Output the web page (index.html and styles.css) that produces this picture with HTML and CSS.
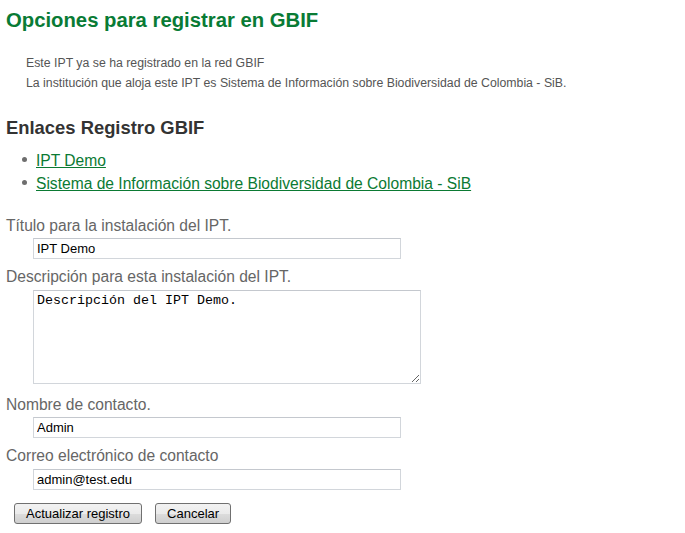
FILE: index.html
```html
<!DOCTYPE html>
<html lang="es">
<head>
<meta charset="utf-8">
<title>Opciones para registrar en GBIF</title>
<link rel="stylesheet" href="styles.css">
</head>
<body>
<div class="page">
  <h1 class="title">Opciones para registrar en GBIF</h1>
  <div class="intro">
    <p>Este IPT ya se ha registrado en la red GBIF</p>
    <p>La institución que aloja este IPT es Sistema de Información sobre Biodiversidad de Colombia - SiB.</p>
  </div>
  <h2 class="subtitle">Enlaces Registro GBIF</h2>
  <ul class="links">
    <li><a href="#">IPT Demo</a></li>
    <li><a href="#">Sistema de Información sobre Biodiversidad de Colombia - SiB</a></li>
  </ul>
  <form class="form">
    <label class="label label-first" for="title">Título para la instalación del IPT.</label>
    <input class="field" id="title" type="text" value="IPT Demo">
    <label class="label" for="desc">Descripción para esta instalación del IPT.</label>
    <textarea class="area" id="desc">Descripción del IPT Demo.</textarea>
    <label class="label label-after-area" for="name">Nombre de contacto.</label>
    <input class="field" id="name" type="text" value="Admin">
    <label class="label" for="email">Correo electrónico de contacto</label>
    <input class="field field-last" id="email" type="text" value="admin@test.edu">
    <div class="buttons">
      <button type="button" class="btn">Actualizar registro</button>
      <button type="button" class="btn">Cancelar</button>
    </div>
  </form>
</div>
</body>
</html>
```

FILE: styles.css
```css
html, body {
  margin: 0;
  padding: 0;
  background: #ffffff;
}

body {
  font-family: "Liberation Sans", Arial, sans-serif;
  color: #333333;
}

.page {
  padding: 8px 0 0 6px;
}

.title {
  margin: 0;
  font-size: 20.3px;
  line-height: 24px;
  font-weight: bold;
  color: #097b35;
}

.intro {
  margin: 22px 0 0 20px;
  font-size: 12.3px;
  line-height: 19.5px;
  color: #555555;
}

.intro p {
  margin: 0;
}

.subtitle {
  margin: 24px 0 0 0;
  font-size: 18.4px;
  line-height: 22px;
  font-weight: bold;
  color: #333333;
}

.links {
  list-style: none;
  margin: 10px 0 0 0;
  padding: 0 0 0 16px;
  font-size: 15.6px;
  line-height: 23px;
}

.links li {
  display: flex;
  align-items: flex-start;
}

.links li::before {
  content: "";
  width: 5px;
  height: 5px;
  border-radius: 50%;
  background: #6e6e6e;
  margin: 8px 9px 0 0;
  flex: none;
}

.links a {
  color: #0b7a33;
  text-decoration: underline;
}

.form {
  display: flex;
  flex-direction: column;
  align-items: flex-start;
  margin-top: 22px;
}

.label {
  display: block;
  font-size: 15.6px;
  line-height: 18px;
  color: #666666;
  margin-top: 9px;
}

.label-first {
  margin-top: 0;
}

.label-after-area {
  margin-top: 12px;
}

.field {
  box-sizing: border-box;
  width: 368px;
  height: 21px;
  margin: 3px 0 0 27px;
  padding: 0 3px;
  border: 1px solid #d2d6db;
  border-top-color: #c4c8ce;
  font-family: "Liberation Sans", Arial, sans-serif;
  font-size: 13px;
  color: #000000;
  background: #ffffff;
  outline: none;
}

.area {
  box-sizing: border-box;
  width: 388px;
  height: 94px;
  margin: 4px 0 0 27px;
  padding: 2px 3px;
  border: 1px solid #d2d6db;
  border-top-color: #c4c8ce;
  font-family: "Liberation Mono", "Courier New", monospace;
  font-size: 13.33px;
  line-height: 15px;
  color: #000000;
  background: #ffffff;
  outline: none;
}

.field-last {
  margin-top: 4px;
}

.buttons {
  display: flex;
  gap: 13px;
  margin: 13px 0 0 8px;
}

.btn {
  box-sizing: border-box;
  height: 21px;
  padding: 0 11px;
  border: 1px solid #707070;
  border-radius: 3px;
  background: linear-gradient(to bottom, #f2f2f2 0%, #ebebeb 50%, #dddddd 51%, #cfcfcf 100%);
  font-family: "Liberation Sans", Arial, sans-serif;
  font-size: 13px;
  line-height: 19px;
  color: #000000;
}
```
